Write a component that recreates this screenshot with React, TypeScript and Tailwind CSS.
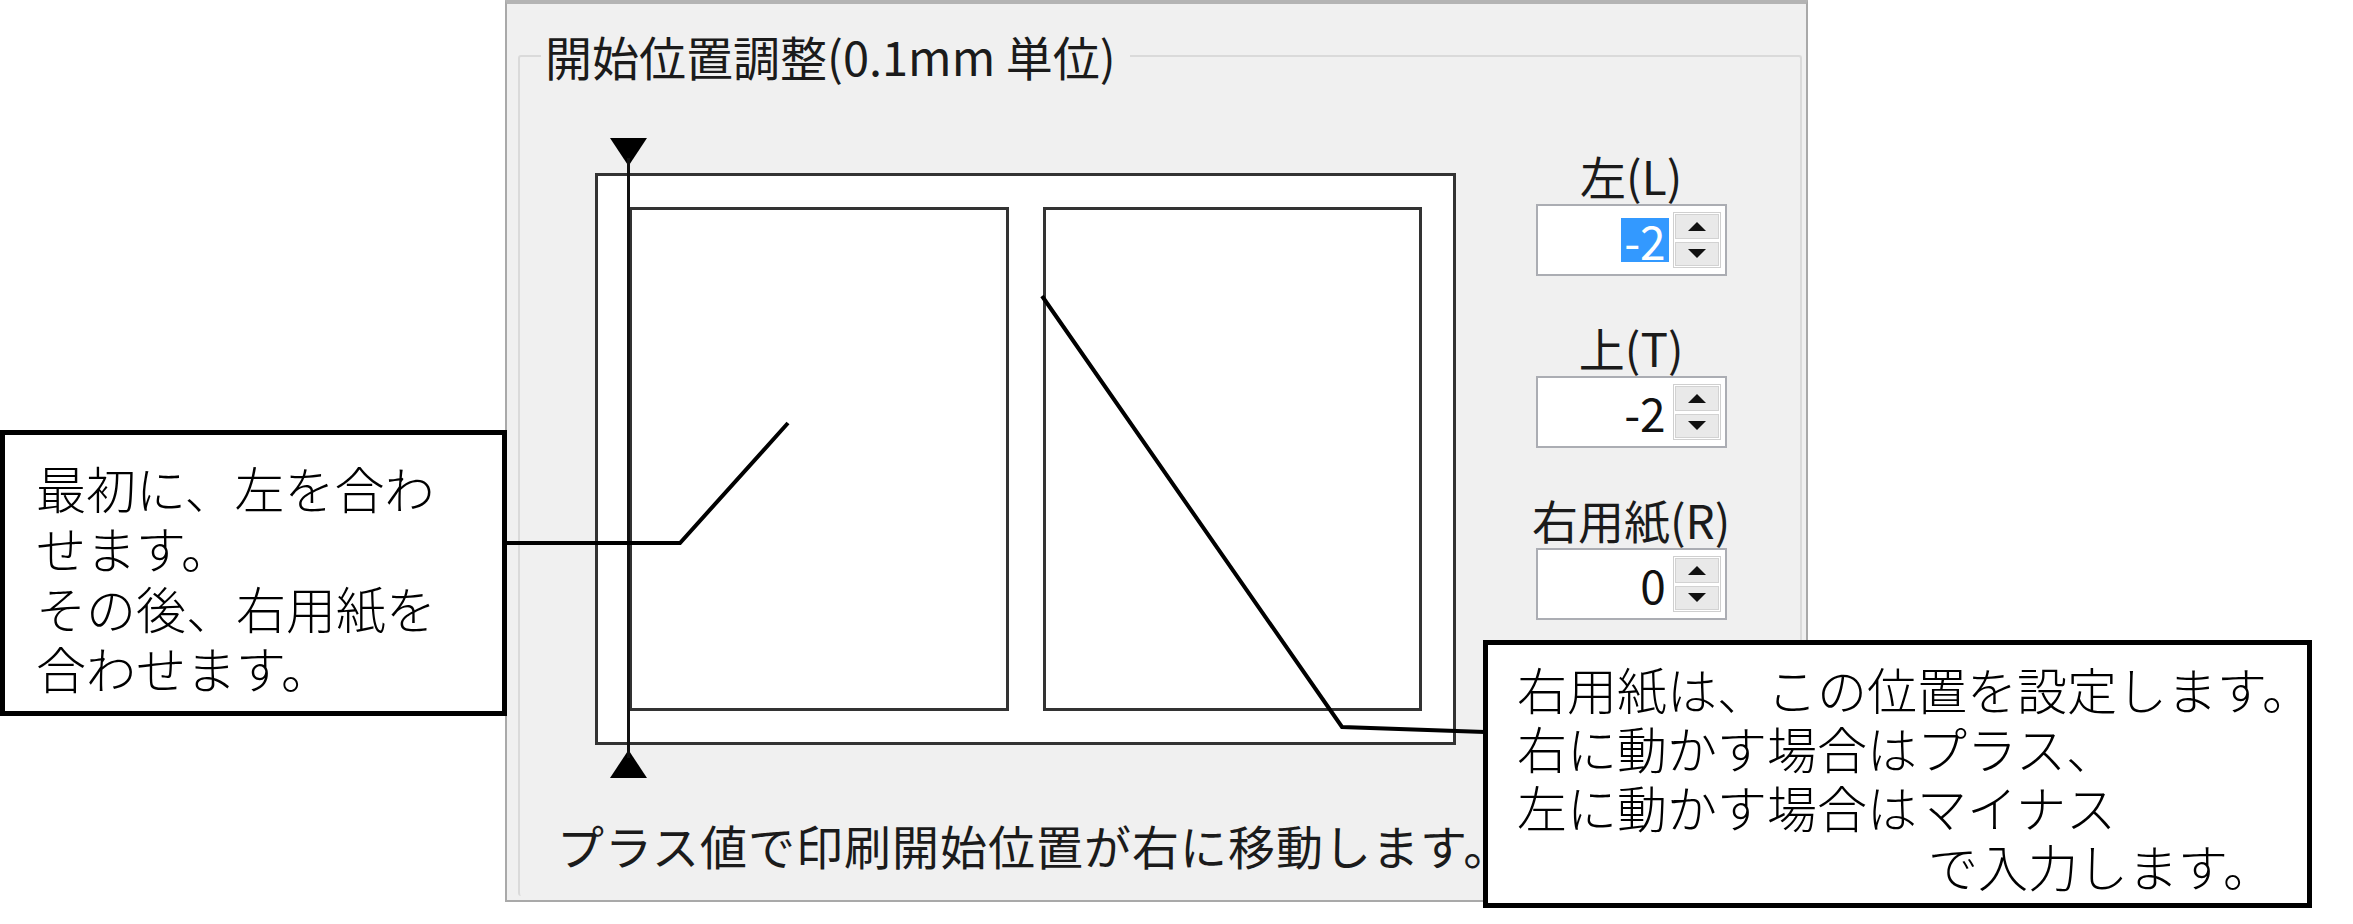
const dialogFont = '"Noto Sans CJK JP", "Noto Sans", sans-serif';

function Triangle({ up = false }: { up?: boolean }) {
  return (
    <svg width="37" height="28" viewBox="0 0 37 28" className="block">
      {up ? <polygon points="18.5,0 37,28 0,28" fill="#000" /> : <polygon points="0,0 37,0 18.5,28" fill="#000" />}
    </svg>
  );
}

function SpinBox({ value, selected = false }: { value: string; selected?: boolean }) {
  return (
    <div className="w-[191px] h-[72px] border-2 border-[#abadb3] bg-white flex items-center justify-end pr-[4px]">
      <span
        className={
          selected
            ? "h-[44px] px-[3px] bg-[#3399ff] text-white text-[46px] leading-[44px]"
            : "h-[44px] px-[3px] text-[#111] text-[46px] leading-[44px]"
        }
      >
        {value}
      </span>
      <div className="ml-[4px] w-[48px] h-[56px] flex flex-col gap-[3px] border border-[#cfcfcf] p-[1px]">
        <div className="flex-1 flex items-center justify-center bg-[#e9e9e9] border border-[#d2d2d2]">
          <svg width="18" height="9" viewBox="0 0 18 9">
            <polygon points="9,0 18,9 0,9" fill="#111" />
          </svg>
        </div>
        <div className="flex-1 flex items-center justify-center bg-[#e9e9e9] border border-[#d2d2d2]">
          <svg width="18" height="9" viewBox="0 0 18 9">
            <polygon points="0,0 18,0 9,9" fill="#111" />
          </svg>
        </div>
      </div>
    </div>
  );
}

function Field({ label, value, selected }: { label: string; value: string; selected?: boolean }) {
  return (
    <div className="flex flex-col items-center">
      <div className="h-[46px] text-[46px] leading-[46px] text-[#1b1b1b] mb-[6px]">{label}</div>
      <SpinBox value={value} selected={selected} />
    </div>
  );
}

export default function App() {
  return (
    <div className="relative w-[2353px] h-[924px] bg-white overflow-hidden" style={{ fontFamily: dialogFont }}>
      {/* dialog panel */}
      <div className="ml-[505px] w-[1303px] h-[902px] bg-[#f0f0f0] border-2 border-[#a9a9a9] border-t-[4px] border-t-[#b4b4b4]">
        <fieldset className="mt-[28px] ml-[11px] mr-[4px] h-[864px] border-2 border-[#dadada] border-b-0 rounded-[3px]">
          <legend className="ml-[21px] pl-[4px] pr-[14px] text-[47px] leading-[47px] text-[#1b1b1b]">
            開始位置調整(0.1mm 単位)
          </legend>

          <div className="flex items-start">
            {/* paper diagram */}
            <div className="relative ml-[75px] mt-[59px] w-[861px] flex flex-col">
              <div className="h-[35px] pl-[15px]">
                <Triangle />
              </div>
              <div className="h-[572px] border-[3px] border-[#333] bg-white p-[31px] flex gap-[34px]">
                <div className="w-[380px] h-full border-[3px] border-[#333] bg-white" />
                <div className="w-[380px] h-full border-[3px] border-[#333] bg-white" />
              </div>
              <div className="mt-[5px] pl-[15px]">
                <Triangle up />
              </div>
              <div className="absolute left-[32px] top-[20px] w-[3px] h-[600px] bg-[#111]" />
            </div>

            {/* offsets */}
            <div className="ml-[76px] mt-[73px] flex flex-col gap-[48px]">
              <Field label="左(L)" value="-2" selected />
              <Field label="上(T)" value="-2" />
              <Field label="右用紙(R)" value="0" />
            </div>
          </div>

          <p className="mt-[43px] ml-[37px] text-[47px] leading-[47px] tracking-[1px] text-[#1b1b1b] whitespace-nowrap">
            プラス値で印刷開始位置が右に移動します。
          </p>
        </fieldset>
      </div>

      {/* connector lines */}
      <svg className="absolute inset-0 pointer-events-none" width="2353" height="924">
        <polyline points="505,543 680,543 788,423" fill="none" stroke="#000" strokeWidth="4" />
        <polyline points="1485,732 1342,727 1042,296" fill="none" stroke="#000" strokeWidth="4" />
      </svg>

      {/* callouts */}
      <div className="absolute left-0 top-[430px] w-[507px] h-[286px] border-[5px] border-black bg-white pl-[31px] pt-[22px] text-[50px] leading-[60px] font-light text-black">
        最初に、左を合わ
        <br />
        せます。
        <br />
        その後、右用紙を
        <br />
        合わせます。
      </div>
      <div className="absolute left-[1483px] top-[640px] w-[829px] h-[268px] border-[5px] border-black bg-white pl-[29px] pt-[14px] text-[50px] leading-[59px] font-light text-black whitespace-nowrap">
        右用紙は、この位置を設定します。
        <br />
        右に動かす場合はプラス、
        <br />
        左に動かす場合はマイナス
        <br />
        <span className="pl-[411px]">で入力します。</span>
      </div>
    </div>
  );
}
